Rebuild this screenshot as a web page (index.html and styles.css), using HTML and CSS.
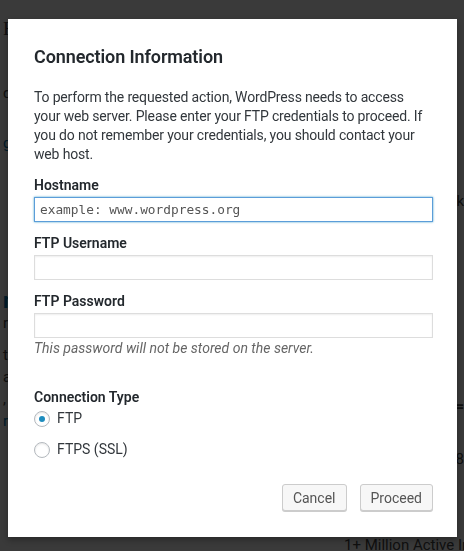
FILE: index.html
```html
<!DOCTYPE html>
<html lang="en">

<head>
    <meta charset="UTF-8">
    <meta name="viewport" content="width=device-width, initial-scale=1.0">
    <title>Connection Information</title>
    <link rel="stylesheet" href="styles.css">
</head>

<body>
    <div class="page">
        <div class="page-side">
            <div class="page-top">F</div>
            <div class="page-row">d</div>
            <div class="page-row gap link">g</div>
            <div class="page-title">n</div>
            <div class="page-row">ra</div>
            <div class="page-row wide">t</div>
            <div class="page-row">ac</div>
            <div class="page-row">,</div>
            <div class="page-row link">rv</div>
        </div>
        <div class="page-right">
            <div class="page-row">k</div>
            <div class="page-row eq">=</div>
            <div class="page-row">,8</div>
            <div class="page-foot">1+ Million Active Installs</div>
        </div>
    </div>

    <div class="overlay"></div>

    <div class="modal">
        <h1>Connection Information</h1>
        <p class="intro">To perform the requested action, WordPress needs to access your web server. Please enter your FTP credentials to proceed. If you do not remember your credentials, you should contact your web host.</p>

        <form class="frm">
            <label for="hostname">Hostname</label>
            <input type="text" id="hostname" class="focus" placeholder="example: www.wordpress.org">

            <label for="username">FTP Username</label>
            <input type="text" id="username">

            <label for="password">FTP Password</label>
            <input type="password" id="password">
            <p class="note">This password will not be stored on the server.</p>

            <div class="type">
                <div class="type-title">Connection Type</div>
                <label class="radio"><input type="radio" name="type" checked> FTP</label>
                <label class="radio"><input type="radio" name="type"> FTPS (SSL)</label>
            </div>

            <div class="actions">
                <button type="button">Cancel</button>
                <button type="button">Proceed</button>
            </div>
        </form>
    </div>
</body>

</html>
```

FILE: styles.css
```css
* {
    box-sizing: border-box;
    margin: 0;
    padding: 0;
}

body {
    background-color: #f1f1f1;
    font-family: Roboto, "Liberation Sans", sans-serif;
    color: #23282d;
    width: 464px;
    height: 551px;
    overflow: hidden;
}

/* page behind the dialog */
.page {
    display: flex;
    justify-content: space-between;
    font-size: 15px;
    color: #444;
    overflow: hidden;
    height: 551px;
}

.page-side {
    padding: 18px 0 0 3px;
}

.page-top {
    font-family: "Liberation Serif", serif;
    font-size: 19px;
    height: 66px;
}

.page-row {
    height: 22px;
}

.page-side .gap {
    margin-top: 28px;
    margin-bottom: 132px;
}

.page-side .wide {
    margin-top: 10px;
}

.page-side .link {
    color: #0073aa;
}

.page-title {
    font-size: 22px;
    font-weight: bold;
    color: #0073aa;
    height: 26px;
}

.page-right {
    padding: 192px 0 0 0;
    width: 120px;
    text-align: right;
}

.page-right .eq {
    margin: 183px 0 31px;
    font-weight: bold;
}

.page-foot {
    margin-top: 64px;
    white-space: nowrap;
    text-align: left;
}

.overlay {
    position: fixed;
    inset: 0;
    background: rgba(0, 0, 0, 0.76);
}

/* dialog */
.modal {
    position: absolute;
    left: 8px;
    top: 19px;
    width: 449px;
    height: 518px;
    background-color: #fff;
    box-shadow: 0 3px 6px rgba(0, 0, 0, 0.3);
    padding: 26px 24px 0 26px;
}

.modal h1 {
    font-size: 18px;
    font-weight: 600;
    line-height: 24px;
    letter-spacing: -0.1px;
    margin-bottom: 19px;
}

.intro {
    font-size: 14px;
    line-height: 19px;
    letter-spacing: -0.16px;
    color: #32373c;
    margin-bottom: 12px;
}

.frm label {
    display: block;
    font-size: 14px;
    font-weight: 600;
    line-height: 19px;
    margin-bottom: 2px;
}

.frm input[type="text"],
.frm input[type="password"] {
    display: block;
    width: 100%;
    height: 25px;
    border: 1px solid #ddd;
    box-shadow: inset 0 1px 2px rgba(0, 0, 0, 0.07);
    margin-bottom: 12px;
    padding: 0 5px;
    font-family: "DejaVu Sans Mono", monospace;
    font-size: 12.8px;
    color: #32373c;
}

.frm input.focus {
    border-color: #5b9dd9;
    box-shadow: 0 0 2px rgba(30, 140, 190, 0.8);
}

.frm input::placeholder {
    color: #555;
}

.note {
    margin-top: -11px;
    font-size: 14px;
    font-style: italic;
    color: #666;
    line-height: 18px;
}

.type {
    margin-top: 31px;
}

.type-title {
    font-size: 14px;
    font-weight: 600;
    line-height: 19px;
    margin-bottom: 2px;
}

.frm .radio {
    display: flex;
    align-items: center;
    gap: 7px;
    font-weight: normal;
    color: #32373c;
    margin-bottom: 12px;
}

.radio input {
    appearance: none;
    width: 16px;
    height: 16px;
    border: 1px solid #b4b9be;
    border-radius: 50%;
    background: #fff;
    box-shadow: inset 0 1px 2px rgba(0, 0, 0, 0.1);
    display: grid;
    place-items: center;
}

.radio input:checked::before {
    content: "";
    width: 6px;
    height: 6px;
    border-radius: 50%;
    background: #1e8cbe;
}

.actions {
    display: flex;
    justify-content: flex-end;
    gap: 13px;
    margin-top: 25px;
}

.actions button {
    height: 27px;
    padding: 0 10px;
    font-family: Roboto, "Liberation Sans", sans-serif;
    font-size: 14px;
    color: #555;
    background: #f7f7f7;
    border: 1px solid #ccc;
    border-radius: 3px;
    box-shadow: 0 1px 0 #ccc;
}
```
